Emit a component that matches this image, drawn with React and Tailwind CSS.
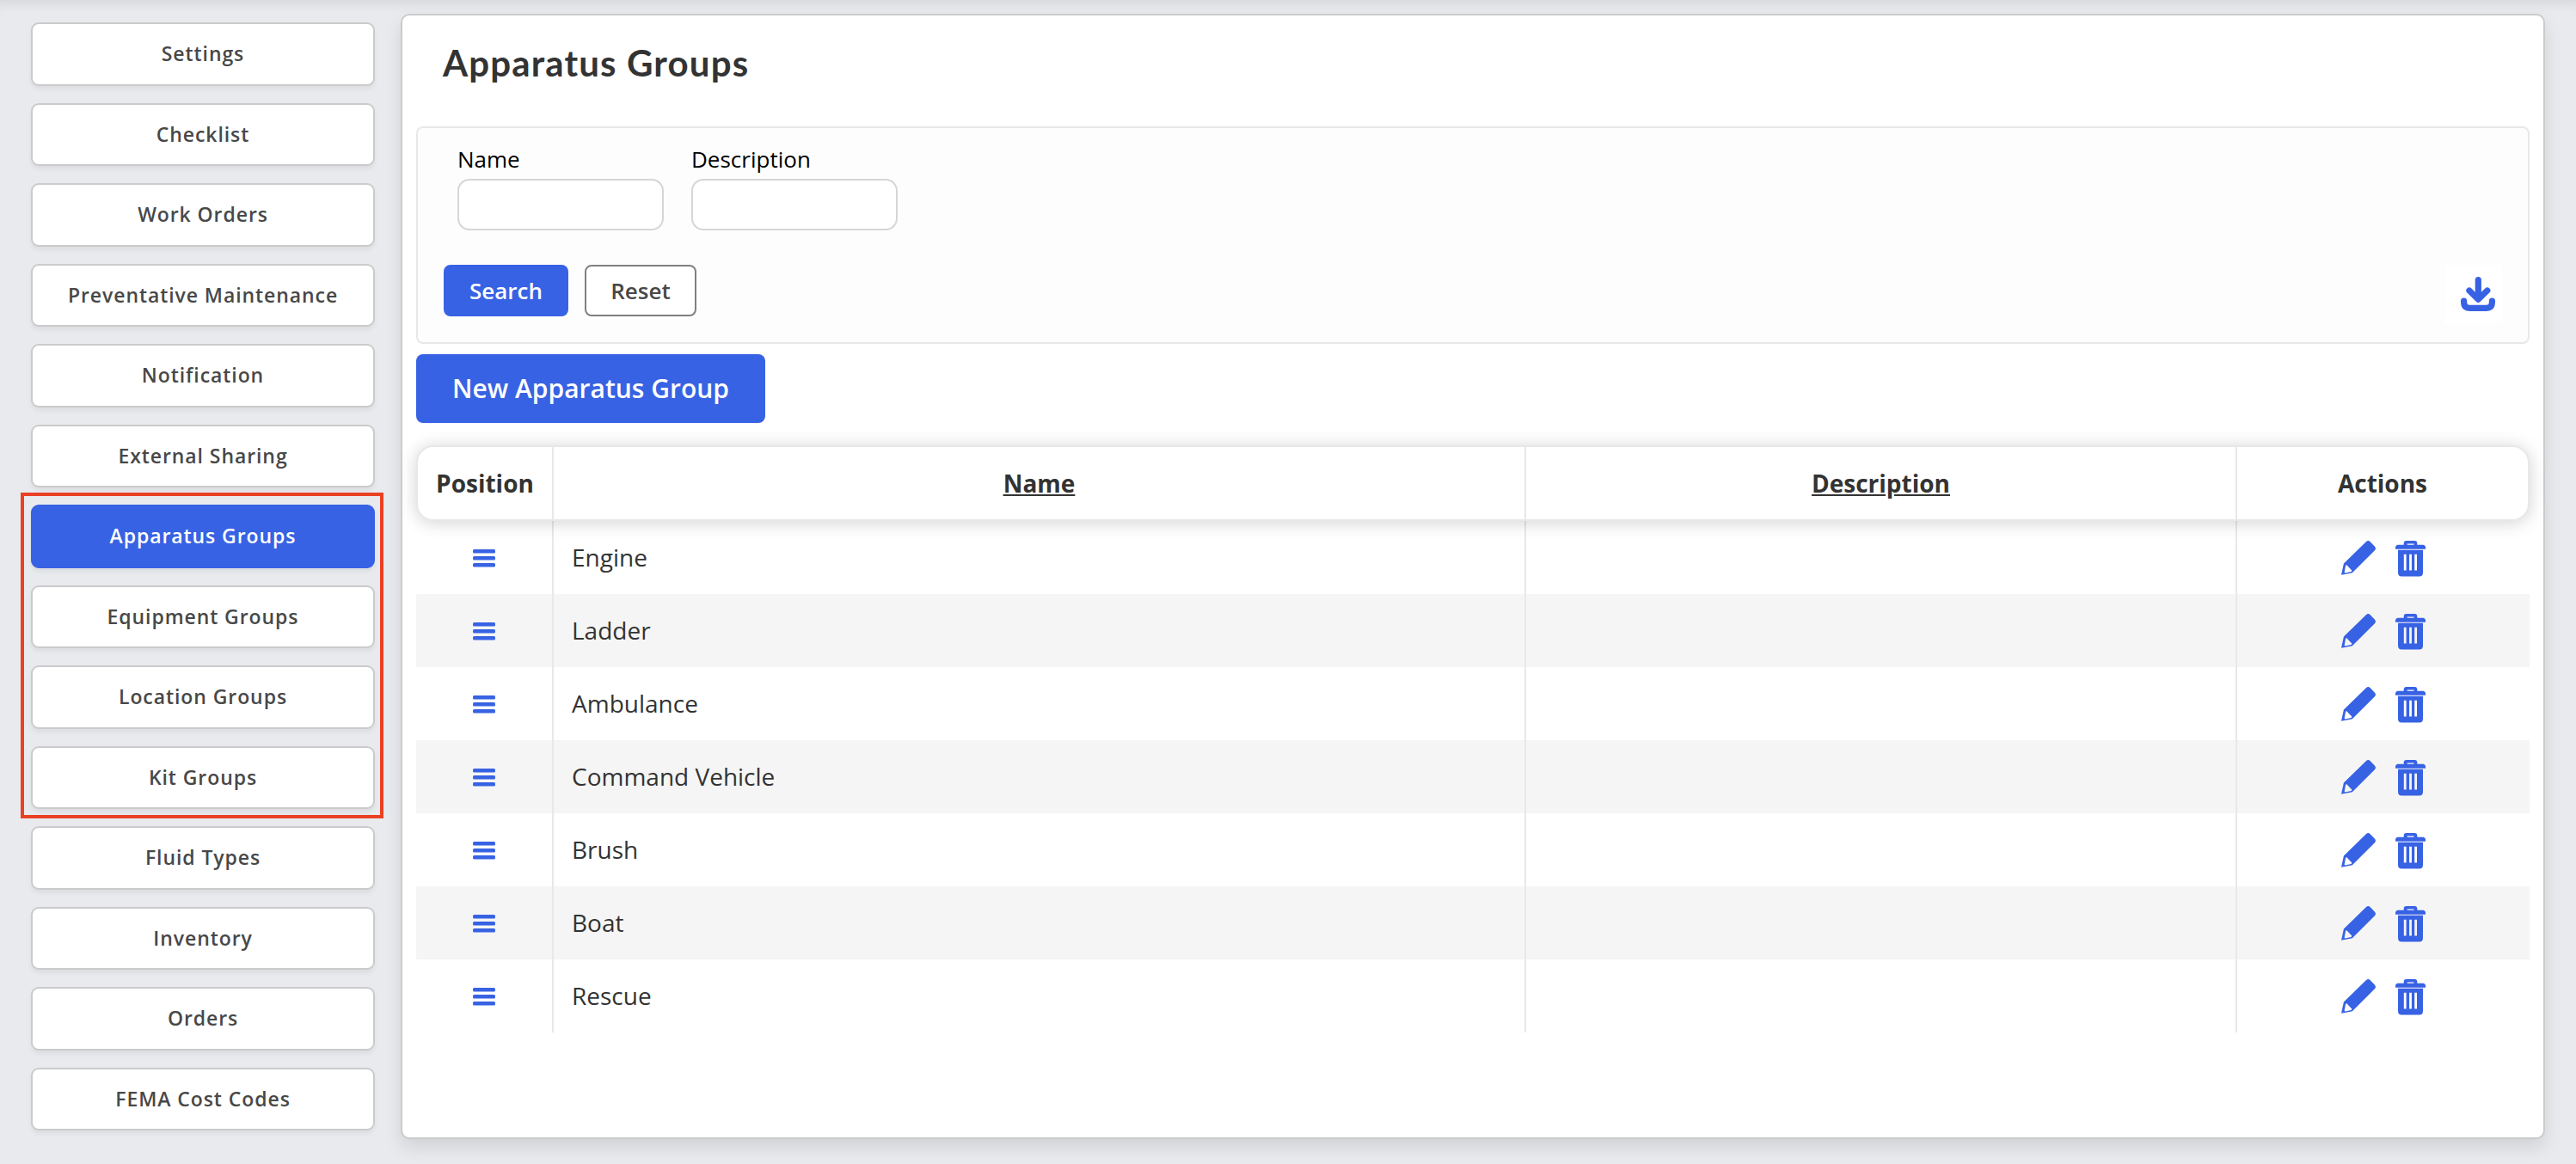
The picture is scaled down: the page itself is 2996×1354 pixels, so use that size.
const menu = [
  { label: 'Settings' },
  { label: 'Checklist' },
  { label: 'Work Orders' },
  { label: 'Preventative Maintenance' },
  { label: 'Notification' },
  { label: 'External Sharing' },
  { label: 'Apparatus Groups', active: true },
  { label: 'Equipment Groups' },
  { label: 'Location Groups' },
  { label: 'Kit Groups' },
  { label: 'Fluid Types' },
  { label: 'Inventory' },
  { label: 'Orders' },
  { label: 'FEMA Cost Codes' },
];

const groups = ['Engine', 'Ladder', 'Ambulance', 'Command Vehicle', 'Brush', 'Boat', 'Rescue'];

const COLUMNS = 'grid grid-cols-[160px_1131px_827px_1fr]';

function PencilIcon() {
  return (
    <svg width="40" height="40" viewBox="0 0 40 40" fill="currentColor" fillRule="evenodd">
      <path d="M2.9 26.6 28.8 1.2Q31.3-1 33.7 1.2L38.8 6.4Q41 8.9 38.9 11.3L13.6 36.6Q12.9 37.4 12 37.6L0 39.8ZM6.3 28.3Q5.2 28 5 29.2L3.7 36.6Q3.7 37.5 4.6 37.4L11.4 35.9Q12.7 35.3 12 34.3Z" />
    </svg>
  );
}

function TrashIcon() {
  return (
    <svg width="35" height="42" viewBox="0 0 35 42" fill="currentColor" fillRule="evenodd">
      <path d="M9.7 4.7V3Q9.7 0 12.7 0H22.3Q25.3 0 25.3 3V4.7H32.5Q34.2 4.9 35 7V9.7H0V7Q.8 4.9 2.5 4.7ZM13.7 4.7H21.5V3.5H13.7Z" />
      <path d="M3 10.8H32V37Q32 41.5 27.8 41.5H7.2Q3 41.5 3 37ZM9.8 15.7V34.5H12.6V15.7ZM16.1 15.7V34.5H18.9V15.7ZM22.2 15.7V34.5H25V15.7Z" />
    </svg>
  );
}

function DownloadIcon() {
  return (
    <svg width="40" height="40" viewBox="0 0 40 40" fill="none" stroke="currentColor" strokeWidth="7.2" strokeLinecap="round" strokeLinejoin="round">
      <path d="M20.3 3.7V25" />
      <path d="M9.9 16 20.3 26.2 30.8 16" />
      <path d="M3.6 28V29.8Q3.6 36.4 10.2 36.4H29.8Q36.4 36.4 36.4 29.8V28" />
    </svg>
  );
}

function DragHandle() {
  return (
    <svg width="26" height="21" viewBox="0 0 26 21" fill="currentColor">
      <rect y="0" width="26" height="4.6" rx="1.5" />
      <rect y="8" width="26" height="4.6" rx="1.5" />
      <rect y="16" width="26" height="4.6" rx="1.5" />
    </svg>
  );
}

function Sidebar() {
  return (
    <nav className="relative w-[400px] shrink-0 flex flex-col gap-5 pt-2.5">
      {menu.map(({ label, active }) => (
        <button
          key={label}
          className={`h-[73.54px] shrink-0 rounded-[9px] text-[23px] font-semibold tracking-[0.92px] pb-px border-2 shadow-[0_4px_5px_rgba(0,0,0,0.05)] ${
            active ? 'bg-[#3862e4] border-[#3862e4] text-white' : 'bg-white border-[#cbcbcb] text-[#484848]'
          }`}
        >
          {label}
        </button>
      ))}
      {/* Outline around the four group pages */}
      <div className="absolute -left-3 top-[557px] w-[422px] h-[379px] border-4 border-[#ea4025] pointer-events-none" />
    </nav>
  );
}

function Field({ label }) {
  return (
    <label className="flex flex-col gap-[5px] text-[26px] leading-9 text-black">
      {label}
      <input type="text" className="w-60 h-[60px] bg-white border-2 border-[#d6d6d6] rounded-[14px] px-3" />
    </label>
  );
}

function Filters() {
  return (
    <div className="h-[253px] bg-[#fdfdfd] border-2 border-[#e8e8e8] rounded-lg pt-[18px] px-[30px]">
      <div className="flex gap-8 pl-4">
        <Field label="Name" />
        <Field label="Description" />
      </div>
      <div className="flex items-start justify-between mt-10">
        <div className="flex gap-[19px] text-[26px] font-semibold">
          <button className="w-[145px] h-[60px] rounded-lg bg-[#3862e4] text-white">Search</button>
          <button className="w-[130px] h-[60px] rounded-lg bg-white border-2 border-[#808080] text-[#484848]">Reset</button>
        </div>
        <button className="w-[66px] h-[68px] bg-white pl-[18px] flex items-center text-[#3862e4]">
          <DownloadIcon />
        </button>
      </div>
    </div>
  );
}

function GroupsTable() {
  return (
    <div className="mt-[26px] text-[28px] text-[#333]">
      <div className="relative z-10 h-[88px] rounded-[20px] border-2 border-[#e8e8e8] bg-white shadow-[0_2px_20px_rgba(0,0,0,0.18)]">
        <div className={`${COLUMNS} h-full -mx-0.5 font-bold text-center leading-[84px]`}>
          <div className="border-r-2 border-[#e8e8e8] pl-0.5">Position</div>
          <div className="border-r-2 border-[#e8e8e8] underline">Name</div>
          <div className="border-r-2 border-[#e8e8e8] underline">Description</div>
          <div className="pr-0.5">Actions</div>
        </div>
      </div>
      {groups.map((name) => (
        <div key={name} className={`${COLUMNS} h-[85px] even:bg-white odd:bg-[#f5f5f5]`}>
          <div className="border-r-2 border-[#e8e8e8] flex items-center justify-center pt-0.5 text-[#3862e4]">
            <DragHandle />
          </div>
          <div className="border-r-2 border-[#e8e8e8] pl-[21px] leading-[84px]">{name}</div>
          <div className="border-r-2 border-[#e8e8e8]" />
          <div className="flex items-start justify-center gap-[23px] pt-[23px] text-[#3862e4]">
            <PencilIcon />
            <TrashIcon />
          </div>
        </div>
      ))}
    </div>
  );
}

export default function App() {
  return (
    <div className="w-[2996px] h-[1354px] overflow-hidden flex items-start gap-[30px] pt-4 pl-9 bg-[#e9eaee] shadow-[inset_0_14px_14px_-10px_rgba(0,0,0,0.09)] font-['Open_Sans',sans-serif]">
      <Sidebar />
      <main className="w-[2494px] h-[1309px] bg-white border-2 border-[#cbcbcb] rounded-[10px] px-4 shadow-[0_10px_20px_rgba(0,0,0,0.1)]">
        <h1 className="h-[129px] pt-[25px] pl-[31px] font-['Lato',sans-serif] text-[42px] leading-[60px] font-bold tracking-[1.15px] text-[#333]">
          Apparatus Groups
        </h1>
        <Filters />
        <button className="mt-3 block w-[406px] h-20 rounded-lg bg-[#3862e4] text-white text-[30px] leading-[78px] font-semibold">
          New Apparatus Group
        </button>
        <GroupsTable />
      </main>
    </div>
  );
}
